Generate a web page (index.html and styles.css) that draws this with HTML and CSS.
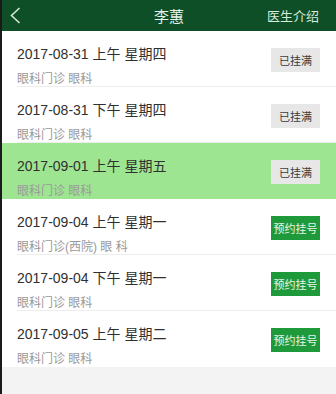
FILE: index.html
```html
<!DOCTYPE html>
<html lang="zh">
<head>
<meta charset="utf-8">
<link rel="stylesheet" href="styles.css">
</head>
<body>
<div class="page">
  <header class="nav">
    <span class="back"><svg width="11" height="17" viewBox="0 0 11 17"><path d="M9.5 1 L1.5 8.5 L9.5 16" fill="none" stroke="#cfe8d3" stroke-width="1.6"/></svg></span>
    <span class="title">李蕙</span>
    <span class="intro">医生介绍</span>
  </header>
  <ul class="list">
    <li class="row"><div class="info"><div class="date">2017-08-31 上午 星期四</div><div class="dept">眼科门诊 眼科</div></div><span class="btn full">已挂满</span></li>
    <li class="row"><div class="info"><div class="date">2017-08-31 下午 星期四</div><div class="dept">眼科门诊 眼科</div></div><span class="btn full">已挂满</span></li>
    <li class="row active"><div class="info"><div class="date">2017-09-01 上午 星期五</div><div class="dept">眼科门诊 眼科</div></div><span class="btn full">已挂满</span></li>
    <li class="row"><div class="info"><div class="date">2017-09-04 上午 星期一</div><div class="dept">眼科门诊(西院) 眼 科</div></div><span class="btn book">预约挂号</span></li>
    <li class="row"><div class="info"><div class="date">2017-09-04 下午 星期一</div><div class="dept">眼科门诊 眼科</div></div><span class="btn book">预约挂号</span></li>
    <li class="row last"><div class="info"><div class="date">2017-09-05 上午 星期二</div><div class="dept">眼科门诊 眼科</div></div><span class="btn book">预约挂号</span></li>
  </ul>
</div>
</body>
</html>
```
FILE: styles.css
```css
* { box-sizing: border-box; }
html, body { margin: 0; padding: 0; }
body {
  width: 336px;
  height: 394px;
  background: #f3f3f3;
  font-family: "Liberation Sans", "Noto Sans CJK SC", sans-serif;
  overflow: hidden;
}
.page {
  height: 394px;
  border-left: 2px solid #1a1a1a;
  background: #f3f3f3;
}
.nav {
  height: 31px;
  background: #0f4f27;
  display: grid;
  grid-template-columns: 1fr auto 1fr;
  align-items: center;
  color: #e6f2e8;
}
.back { padding-left: 8px; display: flex; align-items: center; }
.title { font-size: 15px; color: #e3f1e6; }
.intro { justify-self: end; padding-right: 17px; font-size: 13px; color: #d8eadc; }
.list { list-style: none; margin: 0; padding: 0; background: #fff; }
.row {
  height: 56px;
  display: flex;
  align-items: center;
  justify-content: space-between;
  padding: 0 16px 0 15px;
  position: relative;
  background: #fff;
}
.row::after {
  content: "";
  position: absolute;
  left: 15px;
  right: 0;
  bottom: 0;
  height: 1px;
  background: #ededed;
}
.row.last::after, .row.active::after { display: none; }
.row.active { background: #9ee592; }
.info {
  align-self: flex-start;
  padding-top: 14px;
  display: flex;
  flex-direction: column;
  gap: 9px;
}
.date { font-size: 14px; color: #303030; line-height: 18px; }
.dept { font-size: 12px; color: #9a9a9a; line-height: 15px; }
.btn {
  width: 49px;
  height: 24px;
  display: flex;
  align-items: center;
  justify-content: center;
  font-size: 11px;
  margin-top: 2px;
}
.btn.full { background: #e7e7e7; color: #3a3a3a; }
.btn.book { background: #1f9a3b; color: #e8f5e9; }
```
